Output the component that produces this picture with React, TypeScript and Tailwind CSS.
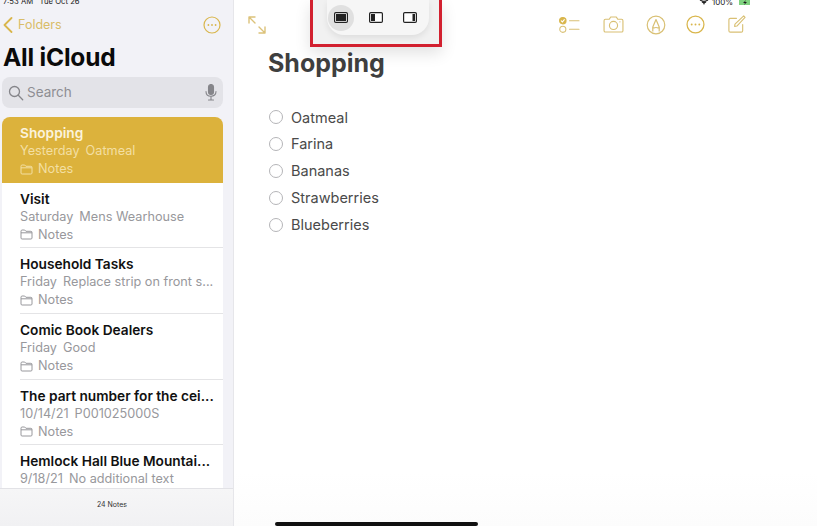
import React from 'react';

const notes = [
  { title: 'Shopping', date: 'Yesterday', preview: 'Oatmeal', selected: true },
  { title: 'Visit', date: 'Saturday', preview: 'Mens Wearhouse' },
  { title: 'Household Tasks', date: 'Friday', preview: 'Replace strip on front s...' },
  { title: 'Comic Book Dealers', date: 'Friday', preview: 'Good' },
  { title: 'The part number for the cei...', date: '10/14/21', preview: 'P001025000S' },
  { title: 'Hemlock Hall Blue Mountai...', date: '9/18/21', preview: 'No additional text' },
];

const checklist = ['Oatmeal', 'Farina', 'Bananas', 'Strawberries', 'Blueberries'];

const gold = '#d9b64c';

const MoreIcon = ({ size = 18 }: { size?: number }) => (
  <svg width={size} height={size} viewBox="0 0 18 18" fill="none" stroke={gold} strokeWidth="1.2">
    <circle cx="9" cy="9" r="8" />
    <circle cx="5.4" cy="9" r="0.9" fill={gold} stroke="none" />
    <circle cx="9" cy="9" r="0.9" fill={gold} stroke="none" />
    <circle cx="12.6" cy="9" r="0.9" fill={gold} stroke="none" />
  </svg>
);

const FolderIcon = ({ color }: { color: string }) => (
  <svg width="13" height="11" viewBox="0 0 13 11" fill="none" stroke={color} strokeWidth="1">
    <path d="M1 9V2.2C1 1.5 1.4 1 2.1 1h2.6l1.2 1.3h5c.7 0 1.1.4 1.1 1.1V9c0 .7-.4 1-1.1 1H2.1C1.4 10 1 9.7 1 9z" />
    <path d="M1 3.8h11" />
  </svg>
);

const NoteRow = ({ note, last }: { note: (typeof notes)[number]; last: boolean }) => {
  const selected = !!note.selected;
  return (
    <div className={`h-[65.7px] pl-[18px] pt-[7px] ${selected ? 'bg-[#dcb23c] rounded-t-lg' : 'bg-white'}`}>
      <div className={`h-[58.7px] ${!selected && !last ? 'border-b border-[#e4e4e6]' : ''}`}>
        <div className={`text-[13.7px] leading-[18px] font-semibold whitespace-nowrap ${selected ? 'text-[#fbf3dc]' : 'text-[#111]'}`}>
          {note.title}
        </div>
        <div className={`text-[12.7px] leading-[18px] whitespace-nowrap ${selected ? 'text-[#f3dfa2]' : 'text-[#98989c]'}`}>
          {note.date}
          <span className="ml-[6px]">{note.preview}</span>
        </div>
        <div className={`flex items-center gap-[5px] text-[12.7px] leading-[18px] ${selected ? 'text-[#f3dfa2]' : 'text-[#98989c]'}`}>
          <FolderIcon color={selected ? '#f3dfa2' : '#98989c'} />
          Notes
        </div>
      </div>
    </div>
  );
};

const Sidebar = () => (
  <aside className="w-[234px] h-full shrink-0 flex flex-col bg-[#f2f2f7] border-r border-[#e6e6ea]">
    <div className="h-[5px] pl-[3px] overflow-hidden text-[7.7px] leading-[4px] text-[#222] whitespace-pre">7:53 AM   Tue Oct 26</div>

    {/* top bar */}
    <div className="h-[28px] pl-[3px] pr-[12px] mt-[6px] flex items-center justify-between">
      <div className="flex items-center gap-[5px] text-[12.5px] text-[#d9bd68]">
        <svg width="10" height="16" viewBox="0 0 10 16" fill="none" stroke={gold} strokeWidth="1.8" strokeLinecap="round" strokeLinejoin="round">
          <path d="M8.5 1 1.5 8l7 7" />
        </svg>
        Folders
      </div>
      <MoreIcon />
    </div>

    <h1 className="pl-[3px] mt-[1px] text-[24.5px] leading-[34px] font-bold text-[#0a0a0a] tracking-[-0.2px]">All iCloud</h1>

    <div className="mx-[2px] w-[221px] h-[31px] mt-[3px] px-[6px] rounded-lg bg-[#e3e3e8] flex items-center justify-between text-[#8e8e93]">
      <div className="flex items-center gap-[3px] text-[13.5px]">
        <svg width="16" height="16" viewBox="0 0 16 16" fill="none" stroke="#85858a" strokeWidth="1.3" strokeLinecap="round">
          <circle cx="6.5" cy="6.5" r="5" />
          <path d="m10.3 10.3 4.4 4.4" />
        </svg>
        Search
      </div>
      <svg width="12" height="17" viewBox="0 0 12 17" fill="none" stroke="#85858a" strokeWidth="1.1" strokeLinecap="round">
        <rect x="3.5" y="0.5" width="5" height="10" rx="2.5" fill="#85858a" />
        <path d="M1 7.5c0 3 2 4.8 5 4.8s5-1.8 5-4.8M6 12.5v3M3.5 16h5" />
      </svg>
    </div>

    <div className="mx-[2px] w-[221px] mt-[9px] flex-1 min-h-0 overflow-hidden">
      {notes.map((note, i) => (
        <NoteRow key={note.title} note={note} last={i === notes.length - 1} />
      ))}
    </div>

    <div className="h-[38px] shrink-0 pt-[10px] pr-[9px] text-center text-[7px] leading-[12px] text-[#333] border-t border-[#e2e2e6] bg-gradient-to-b from-[#f6f6f7] to-[#f1f1f3]">
      24 Notes
    </div>
  </aside>
);

const Toolbar = () => (
  <div className="h-[29px] mt-[10px] pl-[13px] pr-[71px] flex items-center justify-between">
    <svg width="20" height="20" viewBox="0 0 20 20" fill="none" stroke="#dcc27a" strokeWidth="1.4" strokeLinecap="round" strokeLinejoin="round">
      <path d="M2 8V2h6M2 2l6 6M18 12v6h-6M18 18l-6-6" />
    </svg>
    <div className="flex items-center gap-[22px]">
      <svg className="mr-[1px]" width="21" height="18" viewBox="0 0 22 18" fill="none" stroke="#d9c074" strokeWidth="1.1" strokeLinecap="round">
        <circle cx="4" cy="4.5" r="3.4" fill={gold} stroke={gold} />
        <path d="m2.4 4.6 1.2 1.2 2-2.4" stroke="#fff" />
        <circle cx="4" cy="13.5" r="3.2" />
        <path d="M11 4.5h10M11 13.5h10" />
      </svg>
      <svg width="21" height="17" viewBox="0 0 22 18" fill="none" stroke="#d9c074" strokeWidth="1.2" strokeLinejoin="round">
        <path d="M2.5 3.5h4L8 1h6l1.5 2.500h4c.8 0 1.500.6 1.500 1.500v10.500c0 .8-.7 1.500-1.500 1.500h-17C1.700 17 1 16.300 1 15.500V5c0-.9.7-1.500 1.500-1.500z" />
        <circle cx="11" cy="10" r="4.300" />
        <circle cx="17.800" cy="6.200" r="0.700" fill="#d9c074" stroke="none" />
      </svg>
      <svg className="mr-[-2px]" width="20" height="20" viewBox="0 0 20 20" fill="none" stroke="#d9c074" strokeWidth="1.2" strokeLinejoin="round">
        <circle cx="10" cy="10" r="8.800" />
        <path d="M6.800 16.500V12L10 4.500l3.200 7.500v4.500" />
        <path d="M6.800 12.500c1 1 1.900 0 3.200 0s2.200 1 3.200 0" />
      </svg>
      <MoreIcon size={19} />
      <svg width="19" height="19" viewBox="0 0 20 20" fill="none" stroke="#d9c074" strokeWidth="1.2" strokeLinecap="round" strokeLinejoin="round">
        <path d="M10 3.500H3.500C2.700 3.500 2 4.200 2 5v11.500c0 .8.700 1.500 1.500 1.500H15c.8 0 1.500-.7 1.500-1.500V10" />
        <path d="m8 12 .4-2.400L17.600 1 19 2.400 10.400 11.600z" />
      </svg>
    </div>
  </div>
);

const PopupIcon = ({ fill }: { fill: 'full' | 'left' | 'right' }) => (
  <svg width="14" height="11" viewBox="0 0 14 11">
    <rect x="0.600" y="0.600" width="12.800" height="9.800" rx="1.200" fill="#fff" stroke="#222" strokeWidth="1.200" />
    {fill === 'full' && <rect x="2" y="2" width="10" height="7" fill="#222" />}
    {fill === 'left' && <rect x="2" y="2" width="4" height="7" fill="#222" />}
    {fill === 'right' && <rect x="9.500" y="2" width="2.500" height="7" fill="#222" />}
  </svg>
);

const Editor = () => (
  <main className="relative flex-1 h-full bg-gradient-to-b from-white from-90% to-[#fcfcfc]">
    <Toolbar />
    <h2 className="pl-[34px] mt-[8px] text-[25px] leading-[32px] font-bold text-[#3f3f3f]">Shopping</h2>
    <ul className="pl-[35px] mt-[25px]">
      {checklist.map((item) => (
        <li key={item} className="h-[26.900px] flex items-center gap-[8px] text-[14.500px] text-[#4a4a4a]">
          <span className="w-[14px] h-[14px] rounded-full border border-[#b5b5b8]" />
          {item}
        </li>
      ))}
    </ul>

    {/* size picker, boxed in red */}
    <div className="absolute left-[76px] top-0 w-[132px] h-[47px] border-[3px] border-t-0 border-[#d2202f] bg-[#f1f1f1] shadow-[0_6px_16px_rgba(0,0,0,0.12)]">
      <div className="absolute left-[14px] top-0 w-[102px] h-[35px] rounded-b-[17px] bg-[#f6f6f6] shadow-[0_3px_6px_rgba(0,0,0,0.08)] flex items-center gap-[8.500px] pl-[1px]">
        <span className="w-[26px] h-[26px] rounded-full bg-[#e0e0e0] flex items-center justify-center">
          <PopupIcon fill="full" />
        </span>
        <span className="w-[26px] h-[26px] flex items-center justify-center">
          <PopupIcon fill="left" />
        </span>
        <span className="w-[26px] h-[26px] flex items-center justify-center">
          <PopupIcon fill="right" />
        </span>
      </div>
    </div>

    {/* status bar, cut off at the top */}
    <div className="absolute left-[465px] top-0 h-[5px] overflow-hidden flex items-end gap-[3px] text-[8px] leading-[5px] text-[#222]">
      <svg width="10" height="5" viewBox="0 0 10 5" fill="none" stroke="#222" strokeWidth="1.100">
        <path d="M1 0c2.400 1.600 5.600 1.600 8 0M3 2c1.200.8 2.800.8 4 0" />
        <path d="M5 4.800 3.900 3.400c.7-.3 1.500-.3 2.200 0z" fill="#222" stroke="none" />
      </svg>
      <span>100%</span>
      <svg className="ml-[3px]" width="12" height="5" viewBox="0 0 12 5">
        <rect width="11" height="5" fill="#7fd27f" />
        <path d="M7 0 4 3h2L5 5l3-3H6z" fill="#1c1c1c" />
      </svg>
    </div>

    {/* home indicator */}
    <div className="absolute left-[41px] bottom-0 w-[203px] h-[4px] rounded-full bg-[#111]" />
  </main>
);

export default function App() {
  return (
    <div className="w-[817px] h-[526px] flex overflow-hidden bg-white font-['Inter',sans-serif]">
      <Sidebar />
      <Editor />
    </div>
  );
}
